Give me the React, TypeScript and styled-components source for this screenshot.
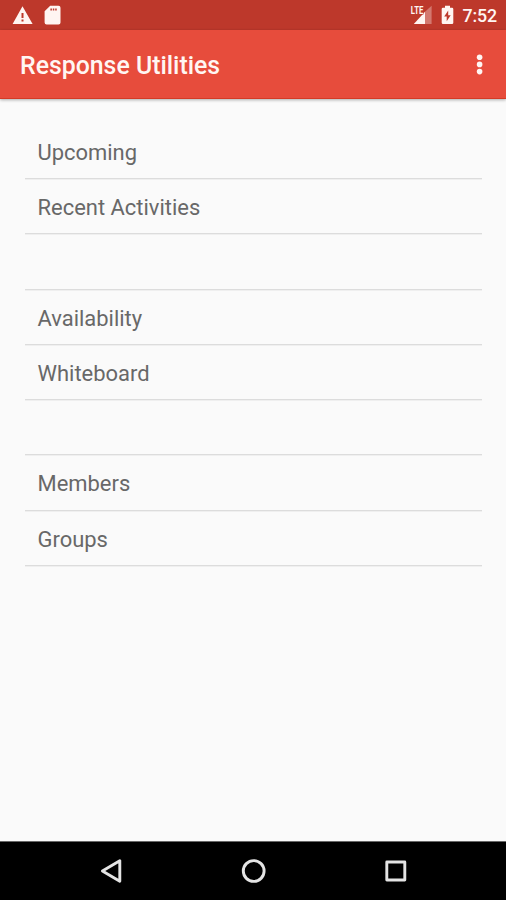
import React from "react";
import styled, { createGlobalStyle } from "styled-components";

const GlobalStyle = createGlobalStyle`
  *, *::before, *::after { box-sizing: border-box; }
  body { margin: 0; background: #fafafa; font-family: Roboto, "Liberation Sans", sans-serif; }
`;

const Screen = styled.div`
  display: flex;
  flex-direction: column;
  width: 100%;
  height: 900px;
  overflow: hidden;
  background: #fafafa;
`;

const StatusBar = styled.header`
  display: flex;
  align-items: center;
  justify-content: space-between;
  flex: none;
  height: 30px;
  padding: 0 9px 0 12px;
  background: #bd382b;
  color: #fff5f2;
`;

const StatusGroup = styled.div<{ $gap: number }>`
  display: flex;
  align-items: center;
  gap: ${({ $gap }) => $gap}px;
`;

const Clock = styled.time`
  padding-top: 2px;
  font-size: 17.8px;
  font-weight: 500;
  letter-spacing: -0.1px;
  line-height: 28px;
`;

const AppBar = styled.div`
  display: flex;
  align-items: center;
  justify-content: space-between;
  flex: none;
  height: 69px;
  padding: 0 22px 0 20px;
  background: #e74c3c;
  border-bottom: 1px solid #d43b26;
  box-shadow: 0 1px 3px rgba(0, 0, 0, 0.32);
  z-index: 1;
`;

const Title = styled.h1`
  margin: 0;
  padding-top: 3px;
  color: #fff6f3;
  font-size: 24.85px;
  font-weight: 500;
  line-height: 32px;
  white-space: nowrap;
`;

const MenuButton = styled.button`
  display: flex;
  padding: 0;
  border: 0;
  background: none;
  color: #fff6f3;
`;

const List = styled.ul`
  flex: 1;
  margin: 0;
  padding: 24.7px 24px 0 25px;
  list-style: none;
`;

const Row = styled.li`
  display: flex;
  align-items: center;
  height: 55.29px;
  padding: 3.8px 12.5px 0;
  border-bottom: 1px solid #dcdcdc;
  box-shadow: 0 1px 0 #efefef;
  color: #686868;
  font-size: 21.95px;
  line-height: 30px;
`;

const NavBar = styled.nav`
  display: flex;
  align-items: center;
  justify-content: space-between;
  flex: none;
  height: 59px;
  padding: 0 98px 1px 98px;
  background: #000;
  border-top: 1px solid #686868;
`;

const NavButton = styled.button`
  display: flex;
  padding: 0;
  border: 0;
  background: none;
  color: #e4e4e4;
`;

const ROWS = ["Upcoming", "Recent Activities", "", "Availability", "Whiteboard", "", "Members", "Groups"];

const WarningIcon = () => (
  <svg width="21" height="20" viewBox="0 0 21 20" fill="currentColor">
    <path d="M10.5 1.2 20.6 19H.6ZM9.5 8v5h2V8Zm0 6.5v2h2v-2Z" fillRule="evenodd" />
  </svg>
);

const SdCardIcon = () => (
  <svg width="17" height="20" viewBox="0 0 17 20" fill="currentColor">
    <path
      d="M6.2.7h8.3a2 2 0 0 1 2 2v14.7a2 2 0 0 1-2 2H2.6a2 2 0 0 1-2-2V6.3ZM6.4 3.4v2.1h1.5V3.4Zm2.4 0v2.1h1.5V3.4Zm2.4 0v2.1h1.5V3.4Z"
      fillRule="evenodd"
    />
  </svg>
);

const SignalText = styled.text`
  font: 700 10.5px Roboto, sans-serif;
`;

const SignalIcon = () => (
  <svg width="23" height="20" viewBox="0 0 23 20" fill="currentColor">
    <path d="M15 6.7 21.6.8V19H15Z" opacity=".34" />
    <path d="M15 6.7V19H3.8Z" />
    <SignalText x="0.8" y="9.4" textLength="12.5" lengthAdjust="spacingAndGlyphs" stroke="#bd382b" strokeWidth="1" paintOrder="stroke">
      LTE
    </SignalText>
  </svg>
);

const BatteryIcon = () => (
  <svg width="13" height="20" viewBox="0 0 13 20" fill="currentColor">
    <path
      d="M4 .8h5v2h2a1.3 1.3 0 0 1 1.3 1.3v13.6a1.3 1.3 0 0 1-1.3 1.3H2a1.3 1.3 0 0 1-1.3-1.3V4.1A1.3 1.3 0 0 1 2 2.8h2ZM7.2 5.4l-4 6h2.5v4.9l4-6.1H7.2Z"
      fillRule="evenodd"
    />
  </svg>
);

const MoreIcon = () => (
  <svg width="9" height="24" viewBox="0 0 9 24" fill="currentColor">
    <circle cx="4.6" cy="5.2" r="2.8" />
    <circle cx="4.6" cy="12.4" r="2.8" />
    <circle cx="4.6" cy="19.6" r="2.8" />
  </svg>
);

const NavIcon = ({ children }: { children: React.ReactNode }) => (
  <svg width="26" height="26" viewBox="0 0 26 26" fill="none" stroke="currentColor" strokeWidth="2.9" strokeLinejoin="round">
    {children}
  </svg>
);

export default function App() {
  return (
    <Screen>
      <GlobalStyle />
      <StatusBar>
        <StatusGroup $gap={11}>
          <WarningIcon />
          <SdCardIcon />
        </StatusGroup>
        <StatusGroup $gap={8}>
          <SignalIcon />
          <BatteryIcon />
          <Clock>7:52</Clock>
        </StatusGroup>
      </StatusBar>
      <AppBar>
        <Title>Response Utilities</Title>
        <MenuButton aria-label="More options">
          <MoreIcon />
        </MenuButton>
      </AppBar>
      <List>
        {ROWS.map((label, index) => (
          <Row key={index}>{label}</Row>
        ))}
      </List>
      <NavBar>
        <NavButton aria-label="Back">
          <NavIcon>
            <path d="M21.8 2.7v20.6L4.4 13Z" />
          </NavIcon>
        </NavButton>
        <NavButton aria-label="Home">
          <NavIcon>
            <circle cx="13.7" cy="13" r="10.4" />
          </NavIcon>
        </NavButton>
        <NavButton aria-label="Recent apps">
          <NavIcon>
            <rect x="4.8" y="4" width="18" height="18" />
          </NavIcon>
        </NavButton>
      </NavBar>
    </Screen>
  );
}
